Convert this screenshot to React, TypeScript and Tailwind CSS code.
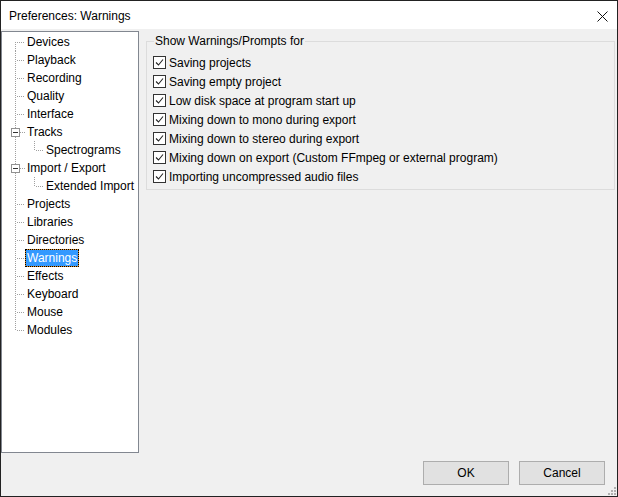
import React from "react"

type Node = {
  label: string
  kind: "first" | "leaf" | "parent" | "child" | "last"
  selected?: boolean
}

const nodes: Node[] = [
  { label: "Devices", kind: "first" },
  { label: "Playback", kind: "leaf" },
  { label: "Recording", kind: "leaf" },
  { label: "Quality", kind: "leaf" },
  { label: "Interface", kind: "leaf" },
  { label: "Tracks", kind: "parent" },
  { label: "Spectrograms", kind: "child" },
  { label: "Import / Export", kind: "parent" },
  { label: "Extended Import", kind: "child" },
  { label: "Projects", kind: "leaf" },
  { label: "Libraries", kind: "leaf" },
  { label: "Directories", kind: "leaf" },
  { label: "Warnings", kind: "leaf", selected: true },
  { label: "Effects", kind: "leaf" },
  { label: "Keyboard", kind: "leaf" },
  { label: "Mouse", kind: "leaf" },
  { label: "Modules", kind: "last" },
]

const warnings = [
  "Saving projects",
  "Saving empty project",
  "Low disk space at program start up",
  "Mixing down to mono during export",
  "Mixing down to stereo during export",
  "Mixing down on export (Custom FFmpeg or external program)",
  "Importing uncompressed audio files",
]

const dot = "#a0a0a0"

function Connector({ kind }: { kind: Node["kind"] }) {
  const isChild = kind === "child"
  const w = isChild ? 42 : 23
  const vTop = kind === "first" ? 9 : 0
  const vBottom = kind === "last" ? 10 : 18
  return (
    <svg width={w} height={18} shapeRendering="crispEdges" className="shrink-0">
      <line x1={13.5} y1={vTop} x2={13.5} y2={vBottom} stroke={dot} strokeDasharray="1 1" />
      {kind === "parent" ? (
        <>
          <line x1={18} y1={9.5} x2={23} y2={9.5} stroke={dot} strokeDasharray="1 1" />
          <rect x={9.5} y={5.5} width={8} height={8} fill="#fff" stroke="#919191" />
          <line x1={11} y1={9.5} x2={16} y2={9.5} stroke="#333" />
        </>
      ) : isChild ? (
        <>
          <line x1={32.5} y1={0} x2={32.5} y2={10} stroke={dot} strokeDasharray="1 1" />
          <line x1={34} y1={9.5} x2={42} y2={9.5} stroke={dot} strokeDasharray="1 1" />
        </>
      ) : (
        <line x1={15} y1={9.5} x2={23} y2={9.5} stroke={dot} strokeDasharray="1 1" />
      )}
    </svg>
  )
}

function Check() {
  return (
    <svg width={13} height={13} shapeRendering="crispEdges" className="shrink-0">
      <rect x={0.5} y={0.5} width={12} height={12} fill="#fff" stroke="#333" />
      <path d="M3 6.5 L5.5 9 L10 3.5" fill="none" stroke="#222" strokeWidth={1.1} shapeRendering="auto" />
    </svg>
  )
}

export default function App() {
  return (
    <div
      className="w-[618px] h-[497px] border border-[#222] flex flex-col text-[12px] text-black select-none"
      style={{ fontFamily: '"Liberation Sans", Arial, sans-serif' }}
    >
      <div className="h-[28px] bg-white flex items-center justify-between pl-[8px] pr-[9px] shrink-0">
        <span className="pt-[2px]">Preferences: Warnings</span>
        <svg width={11} height={11} className="mt-[2px]">
          <path d="M0.5 0.5 L10.5 10.5 M10.5 0.5 L0.5 10.5" stroke="#111" strokeWidth={1} />
        </svg>
      </div>

      <div className="flex-1 bg-[#f0f0f0] flex flex-col relative">
        <div className="flex pt-[2px]">
          <div className="w-[138px] h-[422px] border border-[#828790] bg-white pt-[1px] shrink-0">
            {nodes.map((n) => (
              <div key={n.label} className="flex h-[18px] items-center">
                <Connector kind={n.kind} />
                {n.selected ? (
                  <span className="h-[18px] border border-dotted border-black bg-[#e0902a] flex">
                    <span className="bg-[#3399ff] text-white px-[1px] flex items-center leading-none">
                      {n.label}
                    </span>
                  </span>
                ) : (
                  <span className="px-[2px] leading-none whitespace-nowrap">{n.label}</span>
                )}
              </div>
            ))}
          </div>

          <div className="ml-[7px] mt-[10px] w-[469px] h-[149px] border border-[#dcdcdc] relative pt-[11px] pl-[6px]">
            <span className="absolute -top-[8px] left-[7px] px-[1px] bg-[#f0f0f0] leading-[14px]">
              Show Warnings/Prompts for
            </span>
            {warnings.map((w) => (
              <div key={w} className="flex items-center gap-[3px] h-[19px]">
                <Check />
                <span className="leading-none whitespace-nowrap">{w}</span>
              </div>
            ))}
          </div>
        </div>

        <div className="flex justify-end gap-[10px] mt-[8px] pr-[12px]">
          <button className="w-[86px] h-[24px] bg-[#e1e1e1] border border-[#adadad]">OK</button>
          <button className="w-[86px] h-[24px] bg-[#e1e1e1] border border-[#adadad]">Cancel</button>
        </div>

        <svg width={10} height={10} className="absolute right-0 bottom-0" shapeRendering="crispEdges">
          <rect x={7} y={1} width={2} height={2} fill="#b0b0b0" />
          <rect x={4} y={4} width={2} height={2} fill="#b0b0b0" />
          <rect x={7} y={4} width={2} height={2} fill="#b0b0b0" />
          <rect x={1} y={7} width={2} height={2} fill="#b0b0b0" />
          <rect x={4} y={7} width={2} height={2} fill="#b0b0b0" />
          <rect x={7} y={7} width={2} height={2} fill="#b0b0b0" />
        </svg>
      </div>
    </div>
  )
}
